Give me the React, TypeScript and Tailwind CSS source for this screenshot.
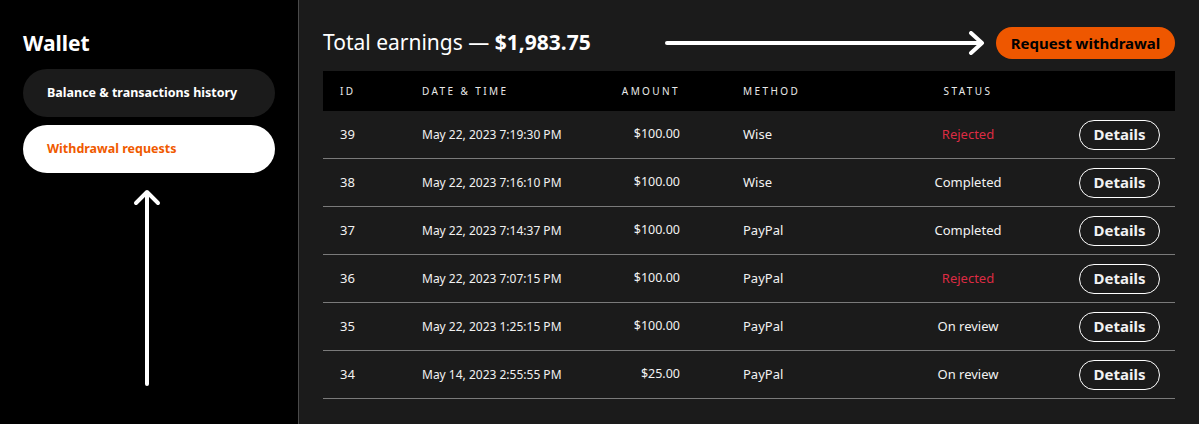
type Row = {
  id: number;
  date: string;
  amount: string;
  method: string;
  status: "Rejected" | "Completed" | "On review";
};

const rows: Row[] = [
  { id: 39, date: "May 22, 2023 7:19:30 PM", amount: "$100.00", method: "Wise", status: "Rejected" },
  { id: 38, date: "May 22, 2023 7:16:10 PM", amount: "$100.00", method: "Wise", status: "Completed" },
  { id: 37, date: "May 22, 2023 7:14:37 PM", amount: "$100.00", method: "PayPal", status: "Completed" },
  { id: 36, date: "May 22, 2023 7:07:15 PM", amount: "$100.00", method: "PayPal", status: "Rejected" },
  { id: 35, date: "May 22, 2023 1:25:15 PM", amount: "$100.00", method: "PayPal", status: "On review" },
  { id: 34, date: "May 14, 2023 2:55:55 PM", amount: "$25.00", method: "PayPal", status: "On review" },
];

const cols = "grid grid-cols-[82px_198px_60px_213px_150px_1fr] items-center pl-[17px] pr-[15px]";

export default function App() {
  return (
    <div
      className="flex h-[424px] w-[1199px] overflow-hidden bg-[#1b1b1b] text-white"
      style={{ fontFamily: '"Noto Sans", "Open Sans", sans-serif' }}
    >
      {/* sidebar */}
      <aside className="flex w-[298px] shrink-0 flex-col bg-black px-[23px] pt-[31px]">
        <h1 className="text-[21px] font-bold leading-[24px]">Wallet</h1>
        <nav className="mt-[14px] flex flex-col gap-[8px]">
          <button className="h-[48px] w-[252px] rounded-full bg-[#1b1b1b] pl-[24px] text-left text-[12.5px] font-bold">
            Balance &amp; transactions history
          </button>
          <button className="h-[48px] w-[252px] rounded-full bg-white pl-[24px] text-left text-[12.5px] font-bold text-[#f05a00]">
            Withdrawal requests
          </button>
        </nav>
        <div className="mt-[14px] flex justify-center pr-[4px]">
          <svg width="30" height="200" viewBox="0 0 30 200" fill="none" stroke="white" strokeWidth="4" strokeLinecap="round" strokeLinejoin="round">
            <path d="M15 6 L15 197" />
            <path d="M4 16 L15 5 L26 16" />
          </svg>
        </div>
      </aside>
      <div className="w-[1px] shrink-0 bg-[#4a4a4a]" />

      {/* main */}
      <main className="flex-1 pl-[24px] pr-[24px] pt-[27px]">
        <div className="flex h-[32px] items-center">
          <h2 className="text-[21px] font-normal">
            Total earnings — <span className="font-bold">$1,983.75</span>
          </h2>
          <div className="ml-auto flex items-center">
            <svg width="322" height="24" viewBox="0 0 322 24" fill="none" stroke="white" strokeWidth="4" strokeLinecap="round" strokeLinejoin="round">
              <path d="M2 12 L316 12" />
              <path d="M306 2 L317 12 L306 22" />
            </svg>
            <button className="ml-[9px] h-[32px] w-[179px] rounded-full bg-[#ee5700] text-[15px] font-bold text-black">
              Request withdrawal
            </button>
          </div>
        </div>

        <div className="mt-[12px]">
          <div className={`${cols} h-[40px] bg-black text-[10px] uppercase tracking-[0.24em] text-[#eaeaea]`}>
            <div>ID</div>
            <div>Date &amp; Time</div>
            <div className="text-right">Amount</div>
            <div className="pl-[63px]">Method</div>
            <div className="text-center">Status</div>
            <div />
          </div>
          {rows.map((r) => (
            <div key={r.id} className={`${cols} h-[48px] border-b border-[#7a7a7a] text-[13px] text-[#f2f2f2]`}>
              <div>{r.id}</div>
              <div className="text-[12px]">{r.date}</div>
              <div className="text-right text-[12.5px]">{r.amount}</div>
              <div className="pl-[63px]">{r.method}</div>
              <div className={`text-center ${r.status === "Rejected" ? "text-[#dc2b43]" : ""}`}>{r.status}</div>
              <div className="flex justify-end">
                <button className="h-[30px] w-[81px] rounded-full border border-white text-[15px] font-bold">
                  Details
                </button>
              </div>
            </div>
          ))}
        </div>
      </main>
    </div>
  );
}
